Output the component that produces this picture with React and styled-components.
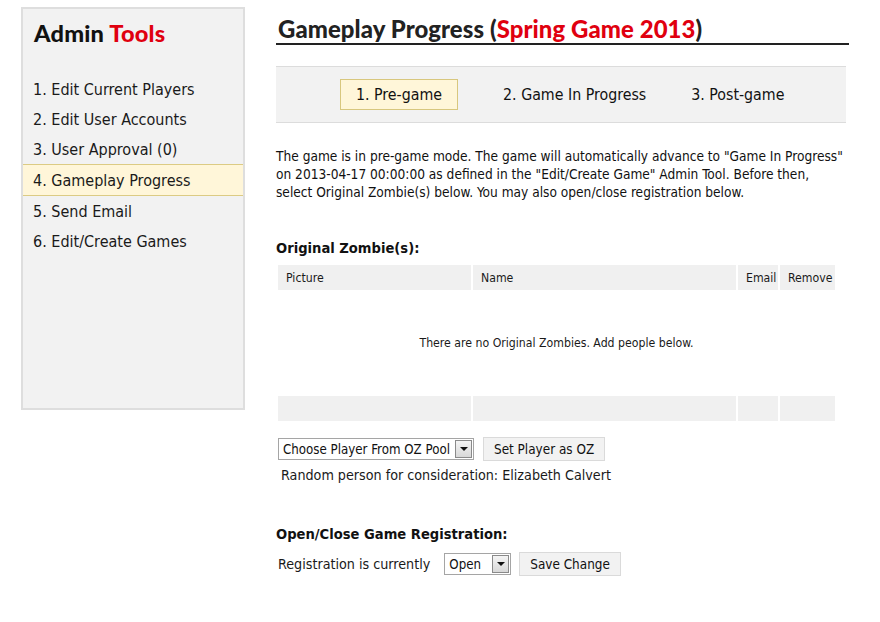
import React from "react";
import styled, { createGlobalStyle } from "styled-components";

const GlobalStyle = createGlobalStyle`
  html, body {
    margin: 0;
    padding: 0;
    background: #fff;
  }

  body {
    font-family: "DejaVu Sans Condensed", "DejaVu Sans", Tahoma, sans-serif;
    color: #111;
  }
`;

const Page = styled.div`
  display: flex;
  align-items: flex-start;
  gap: 31px;
  padding: 7px 0 0 21px;
  width: 880px;
  height: 622px;
  box-sizing: border-box;
`;

const Sidebar = styled.aside`
  width: 224px;
  height: 403px;
  box-sizing: border-box;
  background: #f2f2f2;
  border: 2px solid #dedede;
`;

const SideTitle = styled.h2`
  margin: 0;
  padding: 10px 0 0 11px;
  height: 65px;
  box-sizing: border-box;
  font-family: Lato, "DejaVu Sans", sans-serif;
  font-weight: 900;
  font-size: 23.6px;
  letter-spacing: 0.2px;
  color: #111;
`;

const Red = styled.span`
  color: #e0000f;
`;

const Menu = styled.ul`
  list-style: none;
  margin: 0;
  padding: 0;
`;

const MenuItem = styled.li`
  height: 30px;
  display: flex;
  align-items: center;
  padding-left: 10px;
  font-size: 16px;
  color: #1a1a1a;
  background: ${(p) => (p.$active ? "#fff6d9" : "transparent")};
  border-top: ${(p) => (p.$active ? "1px solid #dccb84" : "none")};
  border-bottom: ${(p) => (p.$active ? "1px solid #dccb84" : "none")};
`;

const Main = styled.main`
  width: 573px;
  display: flex;
  flex-direction: column;
`;

const Title = styled.h1`
  margin: 0;
  padding: 8px 0 0 2px;
  height: 38px;
  box-sizing: border-box;
  border-bottom: 2px solid #222;
  font-family: Lato, "DejaVu Sans", sans-serif;
  font-weight: 900;
  font-size: 23.9px;
  letter-spacing: 0.1px;
  color: #222;
  line-height: 28px;
`;

const Steps = styled.div`
  margin-top: 21px;
  width: 570px;
  height: 57px;
  box-sizing: border-box;
  padding-left: 64px;
  background: #f2f2f2;
  border-top: 1px solid #dcdcdc;
  border-bottom: 1px solid #dcdcdc;
  display: flex;
  align-items: center;
`;

const Step = styled.div`
  height: 31px;
  box-sizing: border-box;
  display: flex;
  align-items: center;
  padding: 0 15px;
  margin-left: ${(p) => p.$offset || 0}px;
  font-size: 15.8px;
  color: #111;
  background: ${(p) => (p.$active ? "#fff6d9" : "transparent")};
  border: 1px solid ${(p) => (p.$active ? "#d8c77e" : "transparent")};
`;

const Intro = styled.p`
  margin: 24px 0 0;
  font-size: 13.6px;
  line-height: 18px;
  color: #111;
`;

const SectionHead = styled.h3`
  margin: 0;
  font-size: 14.6px;
  font-weight: bold;
  color: #111;
`;

const OzHead = styled(SectionHead)`
  margin-top: 38px;
`;

const RegHead = styled(SectionHead)`
  margin-top: 42px;
`;

const Table = styled.table`
  margin-top: 7px;
  width: 561px;
  table-layout: fixed;
  border-spacing: 2px;
  font-size: 12.2px;
  color: #1a1a1a;
`;

const Th = styled.th`
  box-sizing: border-box;
  width: ${(p) => p.$w}px;
  background: #f0f0f0;
  height: 25px;
  padding: 0 0 0 8px;
  text-align: left;
  font-weight: normal;
  white-space: nowrap;
`;

const EmptyCell = styled.td`
  height: 100px;
  text-align: center;
  vertical-align: middle;
`;

const Foot = styled.td`
  background: #f0f0f0;
  height: 25px;
  padding: 0;
`;

const Row = styled.div`
  display: flex;
  align-items: center;
  gap: ${(p) => p.$gap || 9}px;
  margin-top: ${(p) => p.$top || 0}px;
  padding-left: ${(p) => p.$indent || 0}px;
  font-size: 14.2px;
`;

const SelectWrap = styled.div`
  position: relative;
  width: ${(p) => p.$width}px;
  margin-left: ${(p) => p.$left || 0}px;
  height: 22px;
  box-sizing: border-box;
  border: 1px solid #a5a5a5;
  background: #fff;
`;

const Select = styled.select`
  appearance: none;
  width: 100%;
  height: 100%;
  border: none;
  outline: none;
  background: transparent;
  padding: 0 20px 0 4px;
  font-family: "DejaVu Sans Condensed", "DejaVu Sans", Tahoma, sans-serif;
  font-size: 13.2px;
  color: #111;
`;

const Arrow = styled.span`
  position: absolute;
  top: 1px;
  right: 1px;
  width: 17px;
  height: 18px;
  box-sizing: border-box;
  border: 1px solid #8a8a8a;
  background: linear-gradient(#f4f4f4, #d8d8d8);
  display: flex;
  align-items: center;
  justify-content: center;
  pointer-events: none;

  &::after {
    content: "";
    border-left: 4px solid transparent;
    border-right: 4px solid transparent;
    border-top: 4px solid #111;
  }
`;

const Button = styled.button`
  height: 24px;
  padding: 0 10px;
  background: #f2f2f2;
  border: 1px solid #dadada;
  font-family: "DejaVu Sans Condensed", "DejaVu Sans", Tahoma, sans-serif;
  font-size: 13.4px;
  color: #111;
`;

const Note = styled.div`
  margin-top: 6px;
  padding-left: 5px;
  font-size: 14.2px;
  color: #1a1a1a;
`;

const Label = styled.span`
  color: #1a1a1a;
`;

const menu = [
  "1. Edit Current Players",
  "2. Edit User Accounts",
  "3. User Approval (0)",
  "4. Gameplay Progress",
  "5. Send Email",
  "6. Edit/Create Games",
];

const steps = [
  { label: "1. Pre-game", offset: 0 },
  { label: "2. Game In Progress", offset: 29 },
  { label: "3. Post-game", offset: 13 },
];

export default function App() {
  return (
    <>
      <GlobalStyle />
      <Page>
        <Sidebar>
          <SideTitle>
            Admin <Red>Tools</Red>
          </SideTitle>
          <Menu>
            {menu.map((m, i) => (
              <MenuItem key={m} $active={i === 3}>
                {m}
              </MenuItem>
            ))}
          </Menu>
        </Sidebar>

        <Main>
          <Title>
            Gameplay Progress (<Red>Spring Game 2013</Red>)
          </Title>

          <Steps>
            {steps.map((s, i) => (
              <Step key={s.label} $active={i === 0} $offset={s.offset}>
                {s.label}
              </Step>
            ))}
          </Steps>

          <Intro>
            The game is in pre-game mode. The game will automatically advance
            to "Game In Progress" on 2013-04-17 00:00:00 as defined in the
            "Edit/Create Game" Admin Tool. Before then, select Original
            Zombie(s) below. You may also open/close registration below.
          </Intro>

          <OzHead>Original Zombie(s):</OzHead>
          <Table>
            <thead>
              <tr>
                <Th $w={193}>Picture</Th>
                <Th $w={263}>Name</Th>
                <Th $w={40}>Email</Th>
                <Th $w={55}>Remove</Th>
              </tr>
            </thead>
            <tbody>
              <tr>
                <EmptyCell colSpan={4}>
                  There are no Original Zombies. Add people below.
                </EmptyCell>
              </tr>
              <tr>
                <Foot />
                <Foot />
                <Foot />
                <Foot />
              </tr>
            </tbody>
          </Table>

          <Row $top={14} $indent={2}>
            <SelectWrap $width={196}>
              <Select defaultValue="pool">
                <option value="pool">Choose Player From OZ Pool</option>
              </Select>
              <Arrow />
            </SelectWrap>
            <Button>Set Player as OZ</Button>
          </Row>
          <Note>Random person for consideration: Elizabeth Calvert</Note>

          <RegHead>Open/Close Game Registration:</RegHead>
          <Row $top={10} $indent={2} $gap={8}>
            <Label>Registration is currently</Label>
            <SelectWrap $width={67} $left={6}>
              <Select defaultValue="open">
                <option value="open">Open</option>
                <option value="closed">Closed</option>
              </Select>
              <Arrow />
            </SelectWrap>
            <Button>Save Change</Button>
          </Row>
        </Main>
      </Page>
    </>
  );
}
